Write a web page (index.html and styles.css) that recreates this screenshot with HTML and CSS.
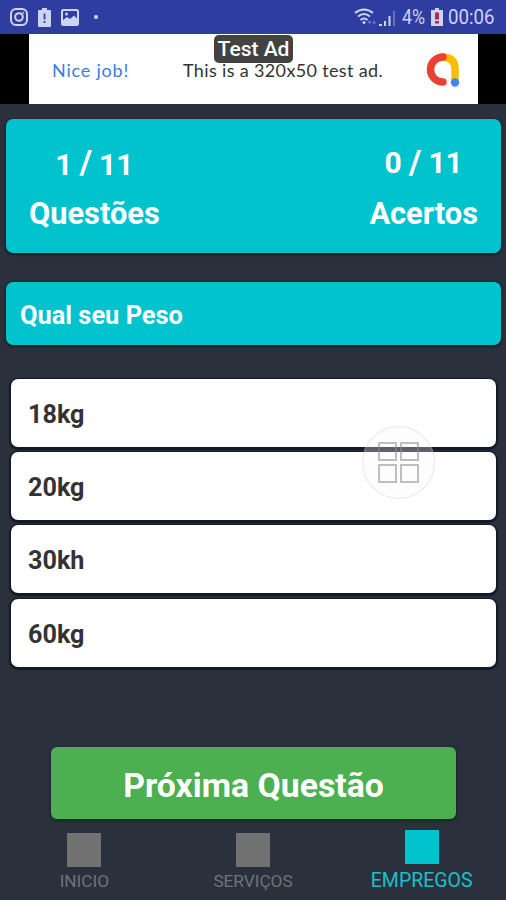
FILE: index.html
```html
<!DOCTYPE html>
<html lang="pt-BR">
<head>
  <meta charset="UTF-8">
  <title>Quiz</title>
  <link rel="stylesheet" href="styles.css">
</head>
<body>

<!-- status bar -->
<header class="status">
  <div class="status-left">
    <svg width="18" height="18" viewBox="0 0 18 18" fill="none" stroke="#cdd3f3" stroke-width="2">
      <rect x="1" y="1" width="16" height="16" rx="5"/>
      <circle cx="9" cy="9" r="3.8"/>
      <circle cx="13.2" cy="4.8" r=".6" stroke-width="1"/>
    </svg>
    <svg width="13" height="19" viewBox="0 0 13 19">
      <path fill="#cdd3f3" d="M4 0h5v2h3q1 0 1 1v15q0 1-1 1H1q-1 0-1-1V3q0-1 1-1h3z"/>
      <path fill="#4450a8" d="M5.5 5.5h2v6h-2zM5.5 13h2v2h-2z"/>
    </svg>
    <svg width="18" height="17" viewBox="0 0 18 17">
      <rect x="1" y="1" width="16" height="15" rx="1.5" fill="#303da0" stroke="#cdd3f3" stroke-width="2"/>
      <path fill="#cdd3f3" d="M2 11l4-3 3 2 4-3.500 4 4V16H2z"/>
      <circle cx="5.5" cy="5" r="1.5" fill="#cdd3f3"/>
    </svg>
    <i class="dot"></i>
  </div>
  <div class="status-right">
    <svg class="wifi" width="23" height="18" viewBox="0 0 23 18" fill="none" stroke="#cdd3f3" stroke-width="2">
      <path d="M1 5Q10 -2 19 5M4 8.500Q10 3.500 16 8.500M6.500 12Q10 9 13.500 12"/>
      <circle cx="10" cy="14.500" r="1.500" fill="#cdd3f3" stroke="none"/>
      <path fill="#6f7ac8" stroke="none" d="M13.500 13h4l-2 3.500zM18 15.500l2-3.500 2 3.500z"/>
    </svg>
    <svg class="signal" width="17" height="17" viewBox="0 0 17 17">
      <path fill="#cdd3f3" d="M0 14h3v2H0zM5 11h2v5H5zM9.500 6h2v10h-2z"/>
      <path fill="#6672bf" d="M14 1h2v15h-2z"/>
    </svg>
    <span class="percent">4%</span>
    <svg class="battery" width="12" height="18" viewBox="0 0 12 18">
      <path fill="#cdd3f3" d="M4 0h4v2h4v16H0V2h4z"/>
      <path fill="#a92d53" d="M4 4.500h4v7H4zM4 13h4v2.500H4z"/>
    </svg>
    <span class="clock">00:06</span>
  </div>
</header>

<!-- ad banner -->
<div class="ad">
  <div class="ad-box">
    <span class="ad-nice">Nice job!</span>
    <span class="ad-text">This is a 320x50 test ad.</span>
    <svg class="ad-logo" width="36" height="36" viewBox="0 0 36 36" fill="none" stroke-width="7.500" stroke-linecap="round">
      <path stroke="#fbbc04" d="M18 5Q30 5.500 30 17V28"/>
      <path stroke="#e94235" d="M18 5A12.500 12.500 0 0 0 18 30"/>
      <circle cx="30" cy="30.500" r="4.200" fill="#4285f4"/>
    </svg>
    <span class="ad-label">Test Ad</span>
  </div>
</div>

<main class="quiz">
  <section class="score">
    <div class="score-item">
      <div class="count low"><span>1</span><span class="slash">/</span><span>11</span></div>
      <div class="score-name">Questões</div>
    </div>
    <div class="score-item">
      <div class="count"><span>0</span><span class="slash">/</span><span>11</span></div>
      <div class="score-name">Acertos</div>
    </div>
  </section>

  <h1 class="question">Qual seu Peso</h1>

  <div class="options">
    <div class="option">18kg</div>
    <div class="option">20kg</div>
    <div class="option">30kh</div>
    <div class="option">60kg</div>
  </div>

  <button class="next">Próxima Questão</button>
</main>

<!-- bottom tabs -->
<nav class="tabs">
  <div class="tab"><i></i><span>INICIO</span></div>
  <div class="tab"><i></i><span>SERVIÇOS</span></div>
  <div class="tab active"><i></i><span>EMPREGOS</span></div>
</nav>

<!-- floating assistive button -->
<div class="assist"><i></i><i></i><i></i><i></i></div>

</body>
</html>
```
FILE: styles.css
```css
*{box-sizing:border-box}
body{margin:0;width:506px;height:900px;overflow:hidden;display:flex;flex-direction:column;background:#2a303c;font-family:Roboto,sans-serif;position:relative}
svg{display:block;flex:none}

/* status bar */
.status{height:34px;flex:none;background:#303da0;color:#cdd3f3;display:flex;justify-content:space-between;padding:0 11px 0 10px}
.status-left,.status-right{display:flex;align-items:center}
.status-left{gap:10px}
.dot{width:4px;height:4px;border-radius:50%;background:#cdd3f3;margin-left:5px}
.signal{margin:3px 6px 0 2px}
.percent,.clock{font-size:20.5px;line-height:36px;white-space:nowrap;transform-origin:0 50%}
.percent{width:24px;transform:scaleX(.87)}
.battery{margin:0 5px}
.clock{width:47px;transform:scaleX(.91)}

/* ad banner */
.ad{height:70px;flex:none;background:#000;padding:0 28px 0 29px}
.ad-box{height:70px;background:#fff;position:relative;display:flex;align-items:center;padding:1px 17px 0 23px;font-family:Lato,sans-serif;font-size:18px}
.ad-nice{color:#3b7de0;width:131px;letter-spacing:.8px}
.ad-text{color:#333;letter-spacing:.35px;white-space:nowrap;flex:1}
.ad-label{position:absolute;left:185px;top:1px;width:79px;height:28px;border-radius:5px;background:#424242;color:#fff;font:500 21px/29px Roboto,sans-serif;text-align:center;white-space:nowrap}

/* quiz */
.quiz{padding:15px 5px 0 6px;display:flex;flex-direction:column}
.score,.question{background:#00c3ce;color:#fff;border-radius:7px;box-shadow:0 1px 2px 1px #171d29}
.score{height:134px;display:flex;justify-content:space-between;padding:25px 23px 0 23px}
.score-item{display:flex;flex-direction:column;align-items:center;font-weight:700;font-size:30.8px}
.count{height:36px;line-height:37px;display:flex;gap:7px;font-size:30px}
.low span:not(.slash){padding-top:2px}
.slash{font-size:34px}
.score-name{line-height:36px;margin-top:16px}
.question{height:63px;margin:29px 0 0;padding:0 14px;font-size:25.4px;line-height:66px;font-weight:700}
.options{margin:34px 5px 0;display:flex;flex-direction:column;gap:5.2px}
.option{height:68px;background:#fff;border-radius:7px;box-shadow:0 1px 1px 2px #131a27;padding:0 17px;font-size:25.2px;line-height:71px;font-weight:700;color:#333}
.next{width:405px;height:72px;margin:80px 0 0 45px;padding:5px 0 0;border:0;border-radius:6px;background:#4caf50;color:#fff;font:700 33.8px Roboto,sans-serif;box-shadow:0 1px 2px 1px #1e2631}

/* tabs */
.tabs{display:flex;height:81px}
.tab{flex:1;display:flex;flex-direction:column;align-items:center;padding-top:14px;color:#717379;font-size:17.2px}
.tab i{width:34px;height:34px;background:#717171}
.tab span{line-height:20px;margin-top:4px}
.active{padding-top:11px;color:#18c1ca;font-size:19.5px}
.active i{background:#00c3ce}
.active span{margin-top:7px}

/* floats over the options */
.assist{position:absolute;left:362px;top:426px;width:73px;height:73px;border-radius:50%;border:1px solid rgba(200,200,200,.4);background:rgba(250,250,250,.3);display:grid;grid-template-columns:19px 19px;grid-template-rows:19px 19px;gap:3px;place-content:center}
.assist i{border:2px solid rgba(140,140,140,.55)}
```
